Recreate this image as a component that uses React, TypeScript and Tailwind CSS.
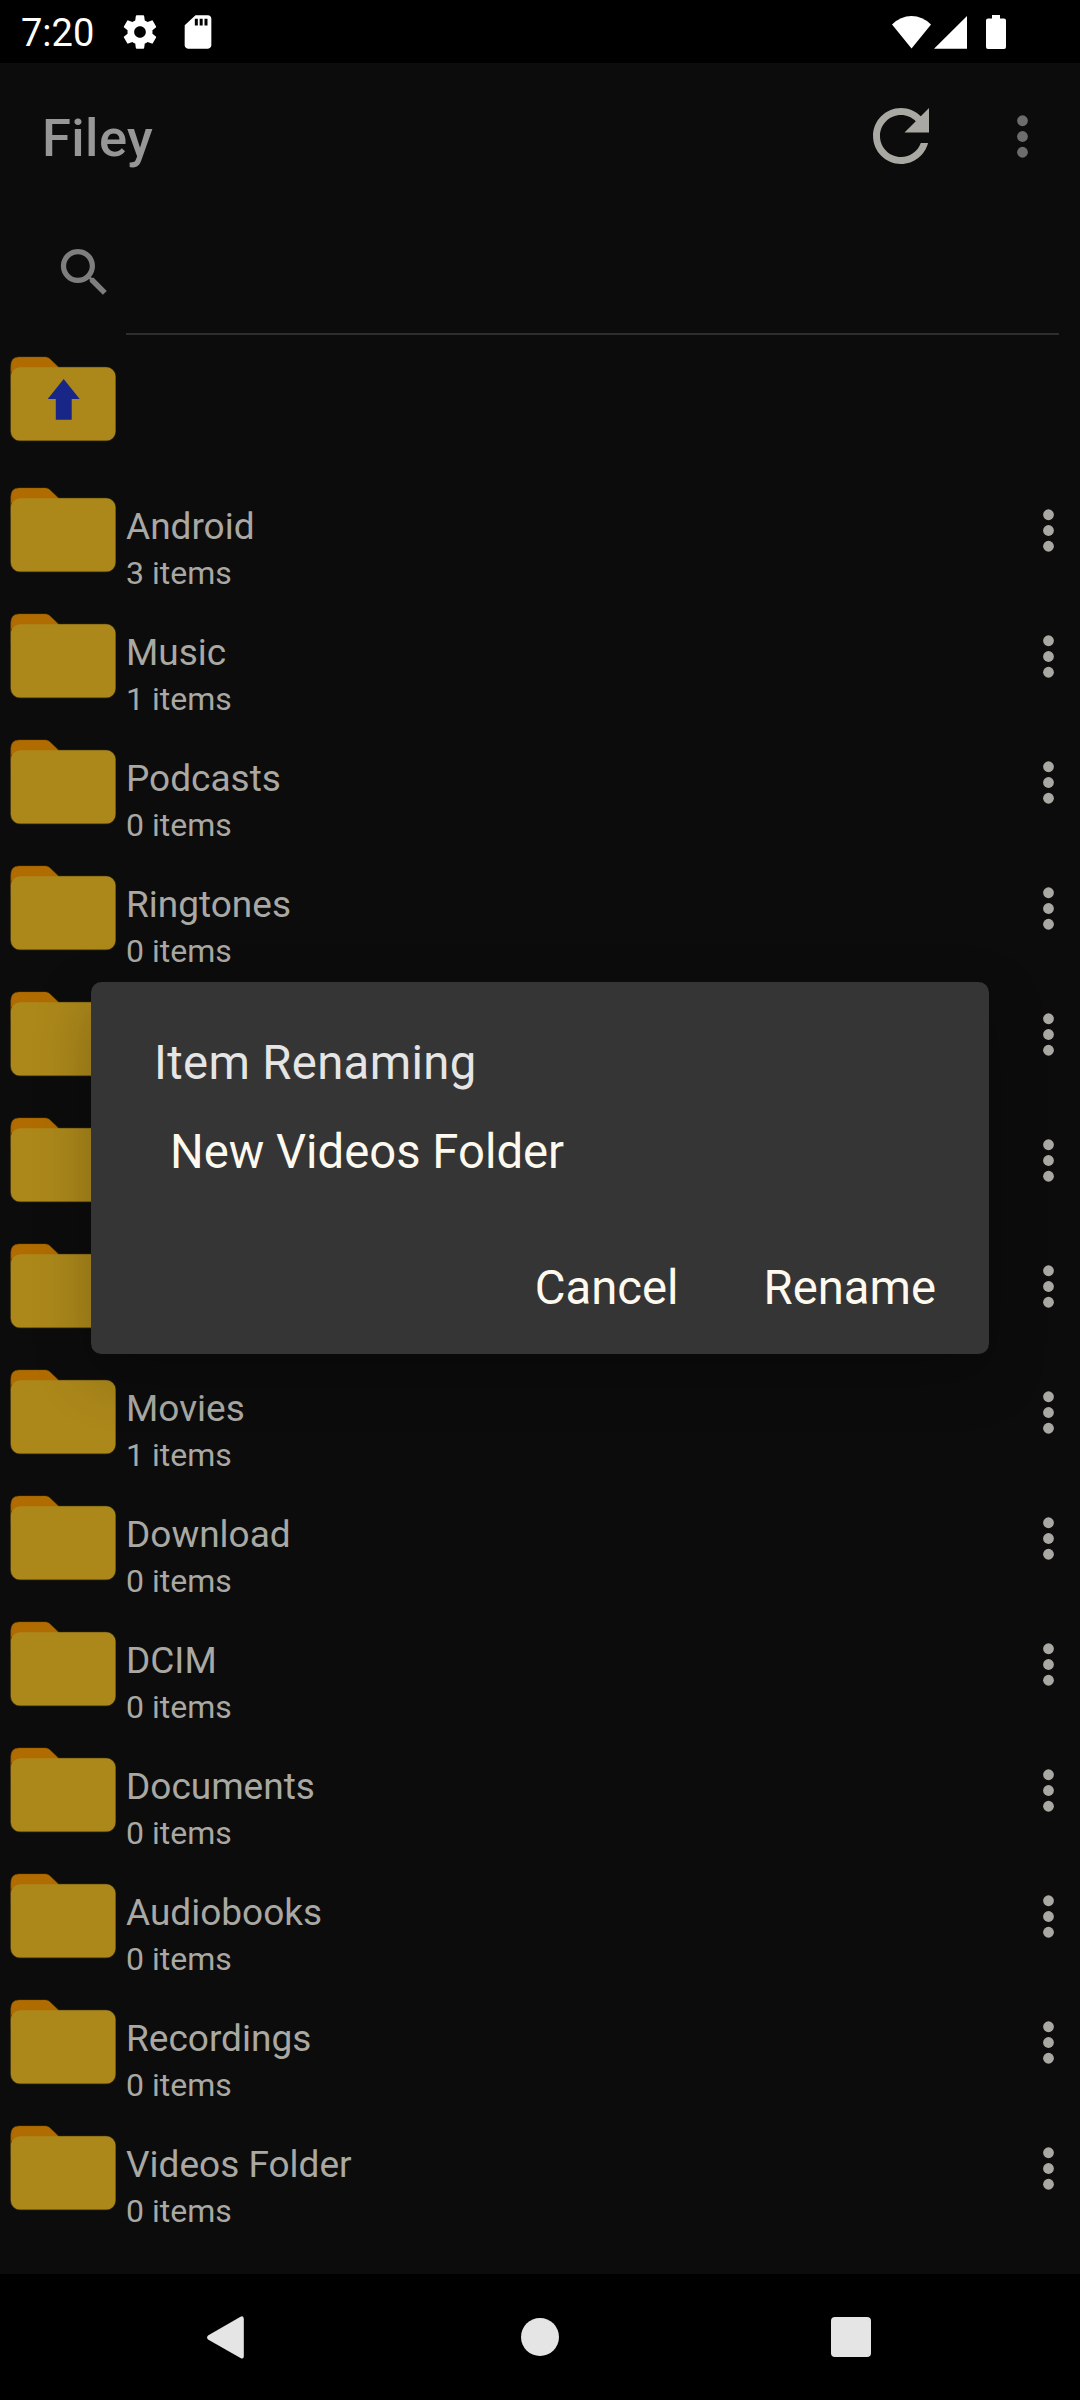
type Item = { name: string; count: string };

const items: Item[] = [
  { name: "Android", count: "3 items" },
  { name: "Music", count: "1 items" },
  { name: "Podcasts", count: "0 items" },
  { name: "Ringtones", count: "0 items" },
  { name: "", count: "" },
  { name: "", count: "" },
  { name: "", count: "" },
  { name: "Movies", count: "1 items" },
  { name: "Download", count: "0 items" },
  { name: "DCIM", count: "0 items" },
  { name: "Documents", count: "0 items" },
  { name: "Audiobooks", count: "0 items" },
  { name: "Recordings", count: "0 items" },
  { name: "Videos Folder", count: "0 items" },
];

function Folder({ up = false }: { up?: boolean }) {
  return (
    <svg width="106" height="86" viewBox="0 0 106 86" className="block shrink-0">
      <path d="M.7 30V10Q.7 .9 9 .9H35.500Q38 .9 39.800 2.700L49 11.500V22H.7Z" fill="#b06c00" stroke="#5a3d08" strokeWidth=".5" />
      <rect x=".7" y="11.300" width="104.800" height="73.400" rx="9" fill="none" stroke="#4a3c12" strokeWidth="1" />
      <path d="M2 24V10Q3 2 9 1.500H35.500Q38 1.500 39.500 3L48.500 12V18H10Z" fill="#b06c00" />
      <rect x=".9" y="11.300" width="104.500" height="73.300" rx="9" fill="#ac881b" />
      {up && <path d="M53.700 23 69.700 43H61.700V63.700H45.800V43H37.700Z" fill="#182687" />}
    </svg>
  );
}

function Dots() {
  return (
    <svg width="63" height="63" viewBox="0 0 24 24" fill="currentColor" className="block shrink-0">
      <circle cx="12" cy="6" r="2.050" />
      <circle cx="12" cy="12" r="2.050" />
      <circle cx="12" cy="18" r="2.050" />
    </svg>
  );
}

function StatusBar() {
  return (
    <div className="flex h-[63px] shrink-0 items-center justify-between bg-black pl-[21px] pr-[74px] text-white">
      <div className="flex items-center">
        <span className="w-[99px] pt-[3px] text-[38px] leading-[60px]">7:20</span>
        <svg width="40" height="40" viewBox="0 0 24 24" fill="currentColor">
          <path d="M19.430 12.980c.04-.32.070-.64.070-.98s-.03-.66-.07-.98l2.110-1.650c.19-.15.24-.42.12-.64l-2-3.460c-.12-.22-.39-.3-.61-.22l-2.490 1c-.52-.4-1.080-.73-1.690-.98l-.38-2.650C14.460 2.180 14.250 2 14 2h-4c-.25 0-.46.18-.49.42l-.38 2.650c-.61.25-1.170.59-1.690.98l-2.490-1c-.23-.09-.49 0-.61.22l-2 3.460c-.13.22-.07.49.12.64l2.110 1.650c-.04.32-.07.65-.07.98s.03.66.070.98l-2.110 1.650c-.19.15-.24.42-.12.64l2 3.460c.12.22.39.3.61.22l2.490-1c.52.4 1.080.73 1.690.98l.38 2.650c.03.24.24.42.49.42h4c.25 0 .46-.18.49-.42l.38-2.650c.61-.25 1.170-.59 1.690-.98l2.490 1c.23.09.49 0 .61-.22l2-3.460c.12-.22.070-.49-.12-.64l-2.110-1.650zM12 15.500c-1.930 0-3.500-1.570-3.500-3.500s1.570-3.500 3.500-3.500 3.500 1.570 3.500 3.500-1.570 3.500-3.500 3.500z" />
        </svg>
        <svg width="40" height="40" viewBox="0 0 24 24" fill="currentColor" className="ml-[18px]">
          <path d="M18 2h-7.500L4.020 8 4 20c0 1.100.9 2 2 2h12c1.100 0 2-.9 2-2V4c0-1.100-.9-2-2-2zm-6.100 6.100h-1.800v-4h1.800v4zm2.900 0h-1.800v-4h1.800v4zm2.900 0h-1.800v-4h1.800v4z" />
        </svg>
      </div>
      <div className="flex items-center">
        <svg width="39" height="34" viewBox="0 0 39 34" fill="currentColor">
          <path d="M19.500 33.500 0 9.500Q8.500 1 19.500 1T39 9.500Z" />
        </svg>
        <svg width="33" height="34" viewBox="0 0 33 34" fill="currentColor" className="ml-[3px]">
          <path d="M0 33.700 33 1V33.700Z" />
        </svg>
        <svg width="20" height="34" viewBox="0 0 20 34" fill="currentColor" className="ml-[19px]">
          <path d="M6 0H14V3.500H18Q20 3.500 20 5.500V32Q20 34 18 34H2Q0 34 0 32V5.500Q0 3.500 2 3.500H6Z" />
        </svg>
      </div>
    </div>
  );
}

function Dialog() {
  return (
    <div className="absolute left-[91px] top-[982px] flex h-[372px] w-[898px] flex-col rounded-[10.500px] bg-[#353535] text-[47.250px] leading-[56px] shadow-[0_20px_56px_rgba(0,0,0,0.250)]">
      <h2 className="mt-[53px] pl-[63px] tracking-[0.350px] text-[#e5e5e5]">Item Renaming</h2>
      <p className="mt-[33px] pl-[79px] text-[#fdf9ee]">New Videos Folder</p>
      <div className="mt-[80px] flex justify-end gap-[85px] pr-[53px] text-[#fdf9ee]">
        <button>Cancel</button>
        <button>Rename</button>
      </div>
    </div>
  );
}

export default function App() {
  return (
    <div className="relative flex h-[2400px] w-[1080px] flex-col overflow-hidden bg-[#0c0c0c] font-['Roboto',sans-serif] text-[#a9a8a2]">
      <StatusBar />
      <header className="flex h-[146px] shrink-0 items-center pl-[42px] pr-[26px]">
        <h1 className="flex-1 pt-[4px] text-[52.500px] font-medium leading-[62px] tracking-[0.400px] text-[#979797]">Filey</h1>
        <svg width="84" height="84" viewBox="0 0 24 24" fill="currentColor" className="mr-[48px]">
          <path d="M17.650 6.350C16.200 4.900 14.210 4 12 4c-4.420 0-7.990 3.580-7.990 8s3.570 8 7.990 8c3.730 0 6.840-2.550 7.730-6h-2.080c-.82 2.330-3.040 4-5.650 4-3.310 0-6-2.690-6-6s2.690-6 6-6c1.660 0 3.140.69 4.220 1.780L13 11h7V4l-2.350 2.350z" />
        </svg>
        <div className="text-[#6d6d6d]"><Dots /></div>
      </header>
      <div className="flex h-[126px] shrink-0 pl-[53px] pr-[21px]">
        <svg width="63" height="63" viewBox="0 0 24 24" fill="#7e7e7e" className="mr-[10px] mt-[32px] shrink-0">
          <path d="M15.500 14h-.79l-.28-.27C15.410 12.590 16 11.110 16 9.500 16 5.910 13.090 3 9.500 3S3 5.910 3 9.500 5.910 16 9.500 16c1.610 0 3.090-.59 4.230-1.570l.27.28v.79l5 4.990L20.490 19l-4.990-5zm-6 0C7.010 14 5 11.990 5 9.500S7.010 5 9.500 5 14 7.010 14 9.500 11.990 14 9.500 14z" />
        </svg>
        <div className="flex-1 border-b-2 border-[#2e2e2e]" />
      </div>
      <div className="flex h-[143px] shrink-0 pl-[10px] pt-[21px]">
        <Folder up />
      </div>
      <ul>
        {items.map((item, i) => (
          <li key={i} className="flex h-[126px] pl-[10px] pt-[9px]">
            <Folder />
            <div className="ml-[10px] flex-1 pt-[18px]">
              <div className="h-[43px] text-[37px] leading-[43px]">{item.name}</div>
              <div className="h-[38px] pt-[7px] text-[32px] leading-[37px]">{item.count}</div>
            </div>
            <div className="mt-[12px]"><Dots /></div>
          </li>
        ))}
      </ul>
      <nav className="mt-auto flex h-[126px] shrink-0 items-center justify-between bg-black pl-[207px] pr-[209px]">
        <svg width="37" height="43" viewBox="0 0 37 43" fill="#e5e5e5">
          <path d="M33.500 .8Q36.800 -.8 36.800 3V40Q36.800 43.800 33.500 42L1 23.500Q-.8 21.500 1 19.500Z" />
        </svg>
        <div className="ml-[4px] h-[38px] w-[38px] rounded-full bg-[#e5e5e5]" />
        <div className="h-[40px] w-[40px] rounded-[4px] bg-[#e5e5e5]" />
      </nav>
      <Dialog />
    </div>
  );
}
